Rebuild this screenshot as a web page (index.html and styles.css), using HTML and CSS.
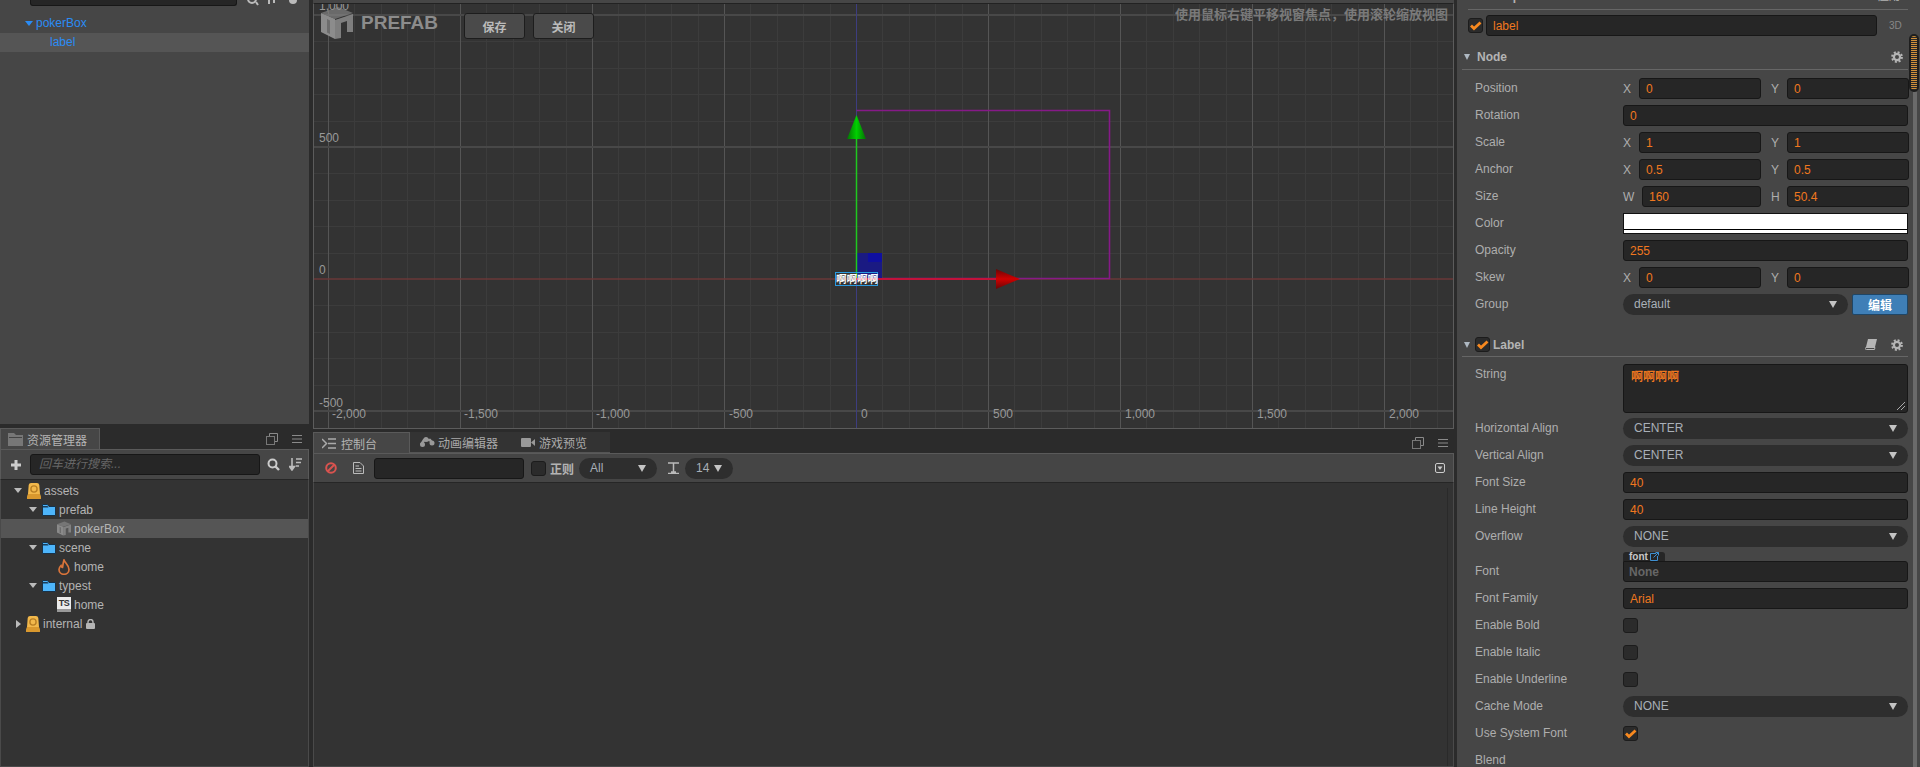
FILE: index.html
```html
<!DOCTYPE html>
<html lang="zh">
<head>
<meta charset="utf-8">
<title>Cocos Creator</title>
<link rel="stylesheet" href="styles.css">
</head>
<body>
<svg class="sprite" width="0" height="0">
  <defs>
    <symbol id="gear" viewBox="0 0 12 12"><circle cx="6" cy="6" r="3.1" fill="none" stroke="#b5b5b5" stroke-width="2.2"/><circle cx="6" cy="6" r="4.9" fill="none" stroke="#b5b5b5" stroke-width="2" stroke-dasharray="2 1.85"/></symbol>
    <symbol id="check" viewBox="0 0 15 15"><path d="M3 7.5 6 10.5 12.5 4.5" fill="none" stroke="#f8891f" stroke-width="2.8"/></symbol>
    <symbol id="copy" viewBox="0 0 12 12"><path d="M3.5 3.5V.5H11.5V8.5H8.5" fill="none" stroke="#8a8a8a"/><rect x=".5" y="3.5" width="8" height="8" fill="none" stroke="#777"/></symbol>
    <symbol id="menu" viewBox="0 0 10 8"><path d="M0 .5H10M0 4H10M0 7.5H10" stroke="#8a8a8a"/></symbol>
    <symbol id="folder" viewBox="0 0 14 12"><path d="M.5 11.5V.5H5.5L7 2.5H13.5V11.5Z" fill="#4db5fb" stroke="#17324a"/><path d="M1 2H5.5L6.5 3.5H1Z" fill="#1a3c58"/></symbol>
    <symbol id="db" viewBox="0 0 14 16"><path d="M4 0H10Q12 0 12.300 2L13 11 14 15Q14 16 13 16H1Q0 16 0 15L1 11 1.700 2Q2 0 4 0Z" fill="#f2b84b"/><path d="M1 11H13L14 15Q14 16 13 16H1Q0 16 0 15Z" fill="#d9982e"/><circle cx="7" cy="6" r="3.1" fill="none" stroke="#b97f24" stroke-width="1.4"/></symbol>
    <symbol id="cube" viewBox="0 0 32 32"><path d="M0 6 14 12V32L0 25Z" fill="currentColor"/><path d="M0 6 17 0 32 6 14 12Z" fill="currentColor" opacity=".62"/><path d="M14 13 32 7V25H26V14L20 16V31L14 32Z" fill="currentColor" opacity=".85"/><path d="M6 12 9 13.500V27L6 25.500Z" fill="#333" opacity=".35"/></symbol>
  </defs>
</svg>
<div class="app">
  <aside class="col-left">
    <section class="hier">
      <div class="hier-tools">
        <span class="plus-cut">+</span>
        <span class="hier-search"></span>
        <svg class="cut-icon" width="62" height="6" viewBox="0 0 62 6"><circle cx="5" cy="-1" r="4" fill="none" stroke="#bbb" stroke-width="2"/><path d="M9 2 11 5M22 0V4M27 0V3" stroke="#bbb" stroke-width="2"/><circle cx="46" cy="0" r="4" fill="#bbb"/></svg>
      </div>
      <div class="row-tree node-root"><i class="tri tri-blue"></i>pokerBox</div>
      <div class="row-tree node-child selected">label</div>
    </section>
    <div class="tabs tabs-left">
      <div class="tab tab-assets">
        <svg width="15" height="13" viewBox="0 0 15 13"><path d="M0 13V0H6L8 2H15V13Z" fill="#777"/><path d="M1 4H14V5H1Z" fill="#444"/></svg>
        <span>资源管理器</span>
      </div>
      <span class="spacer"></span>
      <svg class="tab-ico" width="12" height="12"><use href="#copy"/></svg>
      <svg class="tab-ico ico-menu" width="10" height="8"><use href="#menu"/></svg>
    </div>
    <div class="asset-tools">
      <svg width="12" height="12" viewBox="0 0 12 12"><path d="M6 1V11M1 6H11" stroke="#ccc" stroke-width="3"/></svg>
      <span class="search-box">回车进行搜索...</span>
      <svg class="ico-search" width="13" height="13" viewBox="0 0 13 13"><circle cx="5.5" cy="5.5" r="4" fill="none" stroke="#ccc" stroke-width="2"/><path d="M8.5 8.5 12 12" stroke="#ccc" stroke-width="2.4"/></svg>
      <svg class="ico-sort" width="13" height="13" viewBox="0 0 13 13"><path d="M3 0V11M.5 8.5 3 12 5.5 8.5Z" stroke="#bbb" stroke-width="1.6" fill="#bbb"/><path d="M7 1H13M7 4.500H12M7 8H10" stroke="#bbb" stroke-width="1.6"/></svg>
    </div>
    <div class="asset-tree">
      <div class="asset-row lv0"><i class="tri"></i><svg width="14" height="16"><use href="#db"/></svg><span>assets</span></div>
      <div class="asset-row lv1"><i class="tri"></i><svg width="14" height="12"><use href="#folder"/></svg><span>prefab</span></div>
      <div class="asset-row lv2 selected"><svg class="grey-cube" width="14" height="15"><use href="#cube"/></svg><span>pokerBox</span></div>
      <div class="asset-row lv1"><i class="tri"></i><svg width="14" height="12"><use href="#folder"/></svg><span>scene</span></div>
      <div class="asset-row lv2"><svg width="14" height="16" viewBox="0 0 14 16"><path d="M7 1C8 4 12 6 12 10.500A5 4.800 0 0 1 2 10.500C2 8.500 3 7.500 4 6.500 4.500 8 5 8.500 5.500 8.500 6 6 6 4 7 1Z" fill="none" stroke="#d9743a" stroke-width="1.700"/></svg><span>home</span></div>
      <div class="asset-row lv1"><i class="tri"></i><svg width="14" height="12"><use href="#folder"/></svg><span>typest</span></div>
      <div class="asset-row lv2"><span class="ts-doc">TS</span><span>home</span></div>
      <div class="asset-row lv0"><i class="tri tri-right"></i><svg width="14" height="16"><use href="#db"/></svg><span>internal</span><svg class="ico-lock" width="9" height="10" viewBox="0 0 9 10"><path d="M2 4.500V3A2.500 2.500 0 0 1 7 3V4.500" fill="none" stroke="#b5b5b5" stroke-width="1.400"/><rect y="4" width="9" height="6" rx="1" fill="#b5b5b5"/></svg></div>
    </div>
  </aside>

  <main class="col-mid">
    <section class="scene">
      <svg class="scene-canvas" width="1139" height="424" viewBox="314 4 1139 424">
        <path class="grid-s" d="M354.500 3V429M381.500 3V429M407.500 3V429M434.500 3V429M486.500 3V429M513.500 3V429M539.500 3V429M566.500 3V429M618.500 3V429M645.500 3V429M671.500 3V429M698.500 3V429M750.500 3V429M777.500 3V429M803.500 3V429M830.500 3V429M882.500 3V429M909.500 3V429M935.500 3V429M962.500 3V429M1014.500 3V429M1041.500 3V429M1067.500 3V429M1094.500 3V429M1146.500 3V429M1173.500 3V429M1199.500 3V429M1226.500 3V429M1278.500 3V429M1305.500 3V429M1331.500 3V429M1358.500 3V429M1410.500 3V429M1437.500 3V429M314 41.500H1453M314 68.500H1453M314 94.500H1453M314 121.500H1453M314 173.500H1453M314 200.500H1453M314 226.500H1453M314 253.500H1453M314 305.500H1453M314 332.500H1453M314 358.500H1453M314 385.500H1453"/>
        <path class="grid-b" d="M328.500 3V429M460.500 3V429M592.500 3V429M724.500 3V429M988.500 3V429M1120.500 3V429M1252.500 3V429M1384.500 3V429"/>
        <path class="grid-h" d="M314 15H1453M314 147H1453M314 411H1453"/>
        <path class="axis-x" d="M314 279H1453"/>
        <path class="axis-y" d="M856.500 3V429"/>
        <text class="ruler" x="319" y="10">1,000</text>
        <text class="ruler" x="319" y="142">500</text>
        <text class="ruler" x="319" y="274">0</text>
        <text class="ruler" x="319" y="407">-500</text>
        <text class="ruler" x="332" y="418">-2,000</text>
        <text class="ruler" x="464" y="418">-1,500</text>
        <text class="ruler" x="596" y="418">-1,000</text>
        <text class="ruler" x="729" y="418">-500</text>
        <text class="ruler" x="861" y="418">0</text>
        <text class="ruler" x="993" y="418">500</text>
        <text class="ruler" x="1125" y="418">1,000</text>
        <text class="ruler" x="1257" y="418">1,500</text>
        <text class="ruler" x="1389" y="418">2,000</text>
        <path d="M856.500 110.500H1109.500V278.500H856.500" class="frame"/>
        <path d="M856 253H882V279H856Z" fill="#1a1a82"/>
        <path d="M868 253H882V262H868Z" fill="#0f0fa0"/>
        <path d="M856.500 138V279" stroke="#1fc81f" stroke-width="1.500"/>
        <path d="M856 279H996" stroke="#c2123a" stroke-width="2"/>
        <defs>
          <linearGradient id="gg" x1="0" x2="1" y1="0" y2="0"><stop offset="0" stop-color="#067006"/><stop offset=".5" stop-color="#00d000"/><stop offset="1" stop-color="#067006"/></linearGradient>
          <linearGradient id="rg" x1="0" x2="0" y1="0" y2="1"><stop offset="0" stop-color="#680606"/><stop offset=".5" stop-color="#d00000"/><stop offset="1" stop-color="#680606"/></linearGradient>
        </defs>
        <path d="M856.500 115 866 139H847Z" fill="url(#gg)"/>
        <path d="M996 269 1020 279 996 289Z" fill="url(#rg)"/>
        <rect x="835.500" y="272.500" width="42" height="13" fill="none" stroke="#2a9ae0"/>
        <text class="node-text" x="836" y="283">啊啊啊啊</text>
      </svg>
      <div class="prefab-bar">
        <svg class="logo" width="32" height="32"><use href="#cube"/></svg>
        <span class="logo-text">PREFAB</span>
        <button class="btn">保存</button>
        <button class="btn">关闭</button>
      </div>
      <p class="hint">使用鼠标右键平移视窗焦点，使用滚轮缩放视图</p>
    </section>
    <div class="tabs tabs-mid">
      <div class="tab tab-console">
        <svg width="14" height="11" viewBox="0 0 14 11"><path d="M0 1 4.500 5.500 0 10" fill="none" stroke="#aaa" stroke-width="1.500"/><path d="M6 1H14M6 5.500H14M6 10H14" stroke="#aaa" stroke-width="1.500"/></svg>
        <span>控制台</span>
      </div>
      <div class="tab-group">
        <span class="tab-off t-anim"><svg width="16" height="11" viewBox="0 0 16 11"><path d="M2 8 5 3H11L14 7" fill="none" stroke="#999" stroke-width="2.500"/><circle cx="3.500" cy="7.500" r="2.500" fill="#999"/><circle cx="7" cy="2.500" r="2.500" fill="#999"/><circle cx="13" cy="6" r="2.500" fill="#999"/></svg><span>动画编辑器</span></span>
        <span class="tab-off t-game"><svg width="14" height="9" viewBox="0 0 14 9"><rect width="10" height="9" rx="1" fill="#999"/><path d="M10 4.500 14 1V8Z" fill="#999"/></svg><span>游戏预览</span></span>
      </div>
      <span class="spacer"></span>
      <svg class="tab-ico" width="12" height="12"><use href="#copy"/></svg>
      <svg class="tab-ico ico-menu" width="10" height="8"><use href="#menu"/></svg>
    </div>
    <div class="console-tools">
      <svg width="12" height="12" viewBox="0 0 12 12"><circle cx="6" cy="6" r="4.800" fill="none" stroke="#d9534f" stroke-width="2"/><path d="M2.500 9.500 9.500 2.500" stroke="#d9534f" stroke-width="2"/></svg>
      <svg class="ico-doc" width="11" height="12" viewBox="0 0 11 12"><path d="M.5.5H7L10.500 4V11.500H.5Z" fill="none" stroke="#bbb"/><path d="M2.500 4H6M2.500 6.500H8.500M2.500 9H8.500" stroke="#bbb"/></svg>
      <span class="console-input"></span>
      <span class="box"></span>
      <span class="regex">正则</span>
      <span class="select sel-all">All<i class="tri-sel"></i></span>
      <svg class="ico-font" width="11" height="12" viewBox="0 0 11 12"><path d="M0 1H11M5.500 1V10M0 11.500H11M3 10H8" stroke="#bbb" stroke-width="1.500"/></svg>
      <span class="select sel-size">14<i class="tri-sel"></i></span>
      <span class="spacer"></span>
      <svg class="ico-collapse" width="10" height="10" viewBox="0 0 10 10"><rect x=".5" y=".5" width="9" height="9" rx="1.500" fill="none" stroke="#ccc"/><path d="M2.500 3.500H7.500L5 7Z" fill="#ccc"/></svg>
    </div>
    <div class="console-body"><span class="console-track"></span></div>
  </main>

  <aside class="inspector">
    <div class="insp-top"><b>Prefab: p</b><span>应用</span></div>
    <div class="name-row">
      <span class="box checked"><svg width="15" height="15"><use href="#check"/></svg></span>
      <span class="field name-field">label</span>
      <span class="tag-3d">3D</span>
    </div>
    <div class="sec-head sec-node">
      <i class="tri-sec"></i><b>Node</b><span class="spacer"></span>
      <svg width="12" height="12"><use href="#gear"/></svg>
    </div>
    <div class="row"><label>Position</label><div class="pair"><em>X</em><span class="field">0</span><em class="em-y">Y</em><span class="field">0</span></div></div>
    <div class="row"><label>Rotation</label><span class="field wide">0</span></div>
    <div class="row"><label>Scale</label><div class="pair"><em>X</em><span class="field">1</span><em class="em-y">Y</em><span class="field">1</span></div></div>
    <div class="row"><label>Anchor</label><div class="pair"><em>X</em><span class="field">0.5</span><em class="em-y">Y</em><span class="field">0.5</span></div></div>
    <div class="row"><label>Size</label><div class="pair pair-wh"><em>W</em><span class="field">160</span><em class="em-y">H</em><span class="field">50.4</span></div></div>
    <div class="row"><label>Color</label><span class="color"></span></div>
    <div class="row"><label>Opacity</label><span class="field wide">255</span></div>
    <div class="row"><label>Skew</label><div class="pair"><em>X</em><span class="field">0</span><em class="em-y">Y</em><span class="field">0</span></div></div>
    <div class="row"><label>Group</label><span class="select sel-group">default<i class="tri-sel"></i></span><button class="btn-blue">编辑</button></div>
    <div class="sec-head sec-label">
      <i class="tri-sec"></i><span class="box checked"><svg width="15" height="15"><use href="#check"/></svg></span><b>Label</b><span class="spacer"></span>
      <svg class="ico-book" width="12" height="11" viewBox="0 0 12 11"><path d="M3 0H12L10 8H1Z" fill="#b5b5b5"/><path d="M1 8.500H10L9.500 10.500H1.500A1 1 0 0 1 1 8.500Z" fill="none" stroke="#b5b5b5"/></svg>
      <svg width="12" height="12"><use href="#gear"/></svg>
    </div>
    <div class="row row-string"><label>String</label><span class="field wide area">啊啊啊啊<svg class="grip" width="8" height="8" viewBox="0 0 8 8"><path d="M0 8 8 0M4 8 8 4" stroke="#aaa"/></svg></span></div>
    <div class="row"><label>Horizontal Align</label><span class="select wide">CENTER<i class="tri-sel"></i></span></div>
    <div class="row"><label>Vertical Align</label><span class="select wide">CENTER<i class="tri-sel"></i></span></div>
    <div class="row"><label>Font Size</label><span class="field wide">40</span></div>
    <div class="row"><label>Line Height</label><span class="field wide">40</span></div>
    <div class="row row-overflow"><label>Overflow</label><span class="select wide">NONE<i class="tri-sel"></i></span></div>
    <div class="row row-font"><label>Font</label>
      <div class="font-wrap">
        <span class="font-tag"><b>font</b><svg width="9" height="9" viewBox="0 0 9 9"><path d="M6 1.500H.5V8.500H7.500V4M3.500 5.500 8.500.5M5.500.5H8.500V3.500" fill="none" stroke="#3f8fd0"/></svg></span>
        <span class="field wide none">None</span>
      </div>
    </div>
    <div class="row"><label>Font Family</label><span class="field wide">Arial</span></div>
    <div class="row"><label>Enable Bold</label><span class="box"></span></div>
    <div class="row"><label>Enable Italic</label><span class="box"></span></div>
    <div class="row"><label>Enable Underline</label><span class="box"></span></div>
    <div class="row"><label>Cache Mode</label><span class="select wide">NONE<i class="tri-sel"></i></span></div>
    <div class="row"><label>Use System Font</label><span class="box checked"><svg width="15" height="15"><use href="#check"/></svg></span></div>
    <div class="row"><label>Blend</label></div>
    <div class="scroll-track"></div>
    <div class="scroll-thumb"></div>
  </aside>
</div>
</body>
</html>
```
FILE: styles.css
```css
* { box-sizing: border-box; }
html, body { margin: 0; height: 767px; overflow: hidden; }
body { background: #2b2b2b; color: #b4b4b4; font: 12px "Liberation Sans", "Noto Sans CJK SC", sans-serif; }
.sprite { position: absolute; }
.app { display: flex; height: 767px; }
.spacer { flex: 1; }
i { display: block; font-style: normal; }
svg { display: block; flex: none; }

/* left column */
.col-left { width: 313px; flex: none; display: flex; flex-direction: column; padding-right: 4px; }
.hier { height: 424px; background: #464646; flex: none; }
.hier-tools { height: 14px; position: relative; display: flex; overflow: hidden; }
.plus-cut { position: absolute; left: 9px; top: -12px; font-size: 14px; font-weight: bold; color: #ccc; }
.hier-search { margin-left: 30px; width: 209px; height: 6px; background: #262626; border: 1px solid #171717; border-top: 0; border-radius: 0 0 3px 3px; }
.cut-icon { margin-left: 10px; }
.row-tree { height: 19px; line-height: 19px; color: #2a8cf5; display: flex; align-items: center; }
.node-root { padding-left: 25px; }
.node-child { padding-left: 50px; }
.selected { background: #555; }
.tri { width: 0; height: 0; border-left: 4px solid transparent; border-right: 4px solid transparent; border-top: 5px solid #bbb; }
.tri-blue { border-top-color: #2a8cf5; margin-right: 3px; }
.tri-right { border-top: 4px solid transparent; border-bottom: 4px solid transparent; border-left: 5px solid #bbb; border-right: 0; margin-left: 2px; margin-right: 1px; }

.tabs { height: 21px; flex: none; display: flex; align-items: center; background: #2b2b2b; }
.tab { height: 21px; width: 100px; flex: none; display: flex; align-items: center; background: #464646; border: 1px solid #5a5a5a; border-bottom: 0; color: #b4b4b4; }
.tabs-left { margin-top: 4px; }
.tab-assets { padding-left: 7px; gap: 4px; }
.ico-menu { margin-left: 14px; margin-right: 7px; }
.asset-tools { height: 31px; flex: none; display: flex; align-items: center; background: #464646; border: 1px solid #5a5a5a; border-bottom-color: #262626; padding-left: 9px; }
.search-box { width: 230px; height: 21px; line-height: 19px; margin-left: 8px; padding-left: 8px; background: #262626; border: 1px solid #171717; border-radius: 3px; color: #666; font-style: italic; }
.ico-search { margin-left: 7px; }
.ico-sort { margin-left: 9px; }
.asset-tree { flex: 1; background: #333; border: 1px solid #4a4a4a; border-top: 0; padding-top: 1px; }
.asset-row { height: 19px; display: flex; align-items: center; color: #b4b4b4; }
.asset-row .tri { margin-right: 5px; }
.lv0 { padding-left: 13px; }
.lv1 { padding-left: 28px; }
.lv2 { padding-left: 56px; }
.asset-row > svg + span, .asset-row > .ts-doc + span { margin-left: 3px; }
.grey-cube { color: #8a8a8a; }
.ico-lock { margin-left: 4px; }
.ts-doc { width: 14px; height: 15px; background: #ececec; color: #333; font-size: 9px; font-weight: bold; line-height: 12px; text-align: center; letter-spacing: -.5px; overflow: hidden; border-bottom: 3px solid #999; }

/* middle column */
.col-mid { width: 1141px; flex: none; display: flex; flex-direction: column; }
.scene { height: 429px; flex: none; position: relative; background: #464646; padding-top: 3px; overflow: hidden; }
.scene-canvas { background: #333; width: 1141px; height: 426px; border-left: 1px solid #5c5c5c; border-right: 1px solid #5c5c5c; border-top: 1px solid #222; border-bottom: 1px solid #5c5c5c; }
.grid-s { stroke: #3c3c3c; stroke-width: 1; fill: none; }
.grid-b { stroke: #555; stroke-width: 1; fill: none; }
.grid-h { stroke: #484848; stroke-width: 2; fill: none; }
.axis-x { stroke: #6a3838; stroke-width: 1.500; fill: none; }
.axis-y { stroke: #3d3d80; stroke-width: 1; fill: none; }
.frame { fill: none; stroke: #861a88; stroke-width: 1.600; }
.ruler { font: 12px "Liberation Sans", sans-serif; fill: #999; }
.node-text { font: bold 10.500px "Noto Sans CJK SC", sans-serif; fill: #fff; }
.prefab-bar { position: absolute; left: 8px; top: 7px; display: flex; align-items: center; color: #8c8c8c; }
.logo-text { font: bold 19px "Liberation Sans", sans-serif; margin-left: 8px; width: 103px; }
.btn { width: 61px; height: 26px; margin-right: 8px; padding: 0; background: #4a4a4a; border: 1px solid #1d1d1d; border-radius: 3px; color: #bbb; font: bold 12px "Noto Sans CJK SC", sans-serif; position: relative; top: 3px; }
.hint { position: absolute; right: 6px; top: 5px; margin: 0; color: #7a7a7a; font: bold 13px/18px "Noto Sans CJK SC", sans-serif; white-space: nowrap; }

.tabs-mid { margin-top: 3px; }
.tab-console { width: 97px; padding-left: 8px; gap: 5px; }
.tab-group { height: 21px; width: 200px; display: flex; background: #333; align-items: center; color: #aaa; border-bottom: 1px solid #555; }
.tab-off { display: flex; align-items: center; gap: 3px; }
.t-anim { margin-left: 9px; }
.t-game { margin-left: 23px; gap: 4px; }
.tabs-mid .ico-menu { margin-right: 6px; }
.console-tools { height: 30px; flex: none; display: flex; align-items: center; background: #454545; border: 1px solid #5a5a5a; border-bottom-color: #262626; padding-left: 11px; }
.ico-doc { margin-left: 16px; }
.console-input { width: 150px; height: 21px; margin-left: 10px; background: #262626; border: 1px solid #171717; border-radius: 3px; }
.box { width: 15px; height: 15px; flex: none; background: #2b2b2b; border: 1px solid #1c1c1c; border-radius: 3px; display: block; }
.box svg { margin: -1px; }
.console-tools .box { margin-left: 7px; }
.regex { margin-left: 4px; width: 29px; font-weight: bold; color: #b4b4b4; }
.select { height: 21px; line-height: 21px; flex: none; display: flex; align-items: center; background: #2e2e2e; border-radius: 11px; padding-left: 11px; color: #a9b0b8; position: relative; }
.tri-sel { position: absolute; right: 11px; top: 7px; width: 0; height: 0; border-left: 4px solid transparent; border-right: 4px solid transparent; border-top: 7px solid #c4c4c4; }
.sel-all { width: 78px; }
.ico-font { margin-left: 11px; }
.sel-size { width: 48px; margin-left: 6px; }
.ico-collapse { margin-right: 8px; }
.console-body { flex: 1; background: #333; border: 1px solid #4a4a4a; border-top: 0; display: flex; justify-content: flex-end; padding: 5px 5px 0 0; }
.console-track { width: 1px; background: #2a2a2a; }

/* inspector */
.inspector { margin-left: 3px; width: 463px; flex: none; background: #464646; padding-left: 18px; position: relative; overflow: hidden; }
.insp-top { height: 10px; margin-right: 12px; margin-left: -7px; padding: 0 8px 0 0; display: flex; justify-content: space-between; line-height: 12px; border-bottom: 1px solid #666; }
.insp-top b, .insp-top span { position: relative; top: -10px; }
.insp-top span { font-size: 11px; }
.name-row { height: 21px; margin-top: 5px; display: flex; align-items: center; margin-left: -7px; }
.name-field { width: 391px; margin-left: 3px; }
.tag-3d { margin-left: 12px; font-size: 10px; color: #888; }
.field { height: 21px; line-height: 20px; flex: none; display: block; background: #262626; border: 1px solid #171717; border-radius: 3px; padding-left: 6px; color: #f0781f; }
.sec-head { display: flex; align-items: center; margin-left: -13px; margin-right: 12px; border-bottom: 1px solid #666; padding-right: 5px; color: #b4b4b4; }
.sec-head b { font-size: 12px; }
.sec-node { height: 34px; padding-top: 8px; margin-bottom: 8px; }
.sec-node b { margin-left: 7px; }
.sec-label { height: 32px; margin-top: 10px; padding-top: 8px; margin-bottom: 7px; }
.sec-label b { margin-left: 3px; }
.sec-label .box { margin-left: 5px; }
.tri-sec { width: 0; height: 0; margin-left: 2px; border-left: 3px solid transparent; border-right: 3px solid transparent; border-top: 6px solid #aeb8c2; }
.ico-book { margin-right: 14px; }
.row { display: flex; height: 21px; margin-bottom: 6px; align-items: center; }
.row label { width: 148px; flex: none; color: #aeaeae; position: relative; top: -1px; }
.wide { width: 285px; }
.pair { display: flex; align-items: center; width: 285px; }
.pair em { font-style: normal; width: 16px; flex: none; color: #aeaeae; font-size: 12px; }
.pair .field { width: 122px; }
.pair .em-y { margin-left: 10px; }
.pair-wh > em:first-child { width: 19px; }
.pair-wh > .field:nth-child(2) { width: 119px; }
.color { width: 285px; height: 21px; background: linear-gradient(#fff 15px, #000 15px, #000 16px, #fff 16px); border: 1px solid #111; display: block; }
.sel-group { width: 225px; }
.btn-blue { width: 56px; height: 21px; margin-left: 4px; padding: 0; background: #3f7fb7; border: 1px solid #1f4666; border-radius: 2px; color: #fff; font: bold 12px "Noto Sans CJK SC", sans-serif; }
.row-string { height: 49px; align-items: flex-start; margin-bottom: 5px; }
.row-string label { top: 3px; }
.area { height: 49px; padding-left: 7px; padding-top: 2px; font-weight: bold; position: relative; }
.grip { position: absolute; right: 2px; bottom: 2px; }
.row-overflow { margin-bottom: 5px; }
.row-font { height: 30px; align-items: flex-end; }
.row-font label { top: -4px; }
.font-wrap { display: flex; flex-direction: column; width: 285px; }
.font-tag { width: 42px; height: 9px; background: #262626; border-radius: 3px 3px 0 0; display: flex; align-items: center; gap: 2px; padding-left: 6px; font-size: 10px; color: #c8c8c8; }
.none { color: #666; padding-left: 5px; font-weight: bold; border-radius: 0 3px 3px 3px; }
.scroll-track { position: absolute; left: 456px; top: 92px; bottom: 0; width: 4px; background: #6a6a6a; }
.scroll-thumb { position: absolute; left: 452px; top: 34px; width: 10px; height: 58px; border: 2px solid #1e1e1e; border-radius: 5px; background: repeating-linear-gradient(#d0903a 0 1px, #2a2a2a 1px 2px); }
```
